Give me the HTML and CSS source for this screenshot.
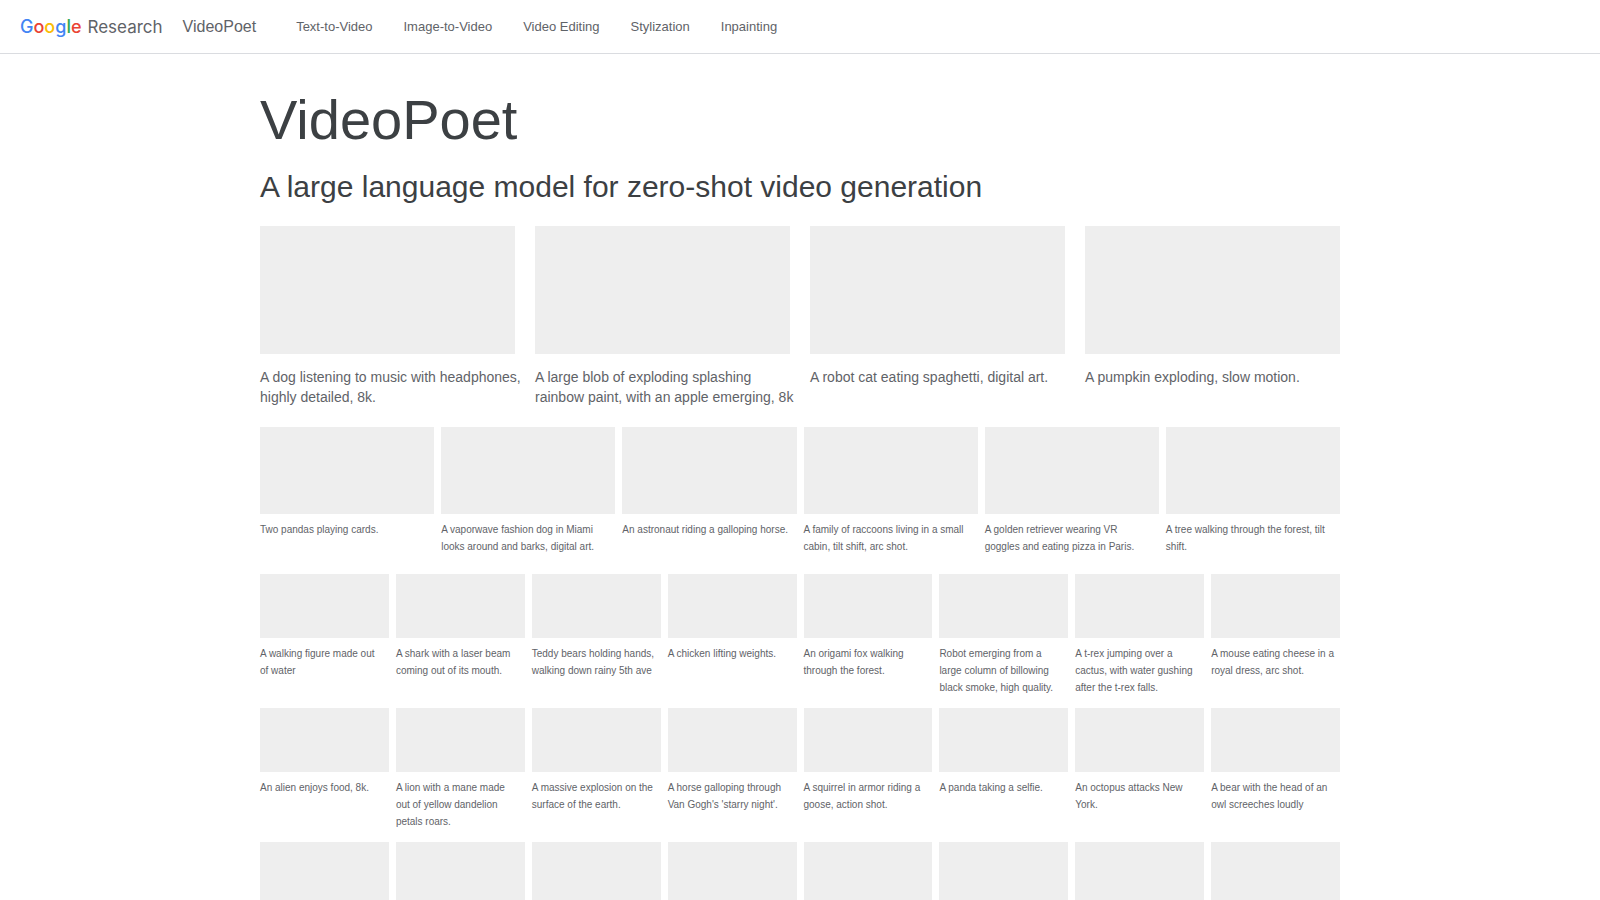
FILE: index.html
```html
<!DOCTYPE html>
<html lang="en">
<head>
  <meta charset="UTF-8">
  <meta name="viewport" content="width=device-width, initial-scale=1.0">
  <title>VideoPoet</title>
  <link rel="stylesheet" href="styles.css">
</head>
<body>
  <header class="header">
    <a class="logo" href="#"><span class="google"><span class="blue">G</span><span class="red">o</span><span class="yellow">o</span><span class="blue">g</span><span class="green">l</span><span class="red">e</span></span><span>Research</span></a>
    <a class="product" href="#">VideoPoet</a>
    <nav class="nav">
      <a href="#">Text-to-Video</a>
      <a href="#">Image-to-Video</a>
      <a href="#">Video Editing</a>
      <a href="#">Stylization</a>
      <a href="#">Inpainting</a>
    </nav>
  </header>

  <main class="container">
    <h1>VideoPoet</h1>
    <h2>A large language model for zero-shot video generation</h2>

    <section class="row large">
      <figure><div class="video"></div><figcaption>A dog listening to music with headphones, highly detailed, 8k.</figcaption></figure>
      <figure><div class="video"></div><figcaption>A large blob of exploding splashing<br>rainbow paint, with an apple emerging, 8k</figcaption></figure>
      <figure><div class="video"></div><figcaption>A robot cat eating spaghetti, digital art.</figcaption></figure>
      <figure><div class="video"></div><figcaption>A pumpkin exploding, slow motion.</figcaption></figure>
    </section>

    <section class="row medium">
      <figure><div class="video"></div><figcaption>Two pandas playing cards.</figcaption></figure>
      <figure><div class="video"></div><figcaption>A vaporwave fashion dog in Miami<br>looks around and barks, digital art.</figcaption></figure>
      <figure><div class="video"></div><figcaption>An astronaut riding a galloping horse.</figcaption></figure>
      <figure><div class="video"></div><figcaption>A family of raccoons living in a small<br>cabin, tilt shift, arc shot.</figcaption></figure>
      <figure><div class="video"></div><figcaption>A golden retriever wearing VR<br>goggles and eating pizza in Paris.</figcaption></figure>
      <figure><div class="video"></div><figcaption>A tree walking through the forest, tilt<br>shift.</figcaption></figure>
    </section>

    <section class="row small">
      <figure><div class="video"></div><figcaption>A walking figure made out<br>of water</figcaption></figure>
      <figure><div class="video"></div><figcaption>A shark with a laser beam<br>coming out of its mouth.</figcaption></figure>
      <figure><div class="video"></div><figcaption>Teddy bears holding hands,<br>walking down rainy 5th ave</figcaption></figure>
      <figure><div class="video"></div><figcaption>A chicken lifting weights.</figcaption></figure>
      <figure><div class="video"></div><figcaption>An origami fox walking<br>through the forest.</figcaption></figure>
      <figure><div class="video"></div><figcaption>Robot emerging from a<br>large column of billowing<br>black smoke, high quality.</figcaption></figure>
      <figure><div class="video"></div><figcaption>A t-rex jumping over a<br>cactus, with water gushing<br>after the t-rex falls.</figcaption></figure>
      <figure><div class="video"></div><figcaption>A mouse eating cheese in a<br>royal dress, arc shot.</figcaption></figure>
    </section>

    <section class="row small">
      <figure><div class="video"></div><figcaption>An alien enjoys food, 8k.</figcaption></figure>
      <figure><div class="video"></div><figcaption>A lion with a mane made<br>out of yellow dandelion<br>petals roars.</figcaption></figure>
      <figure><div class="video"></div><figcaption>A massive explosion on the<br>surface of the earth.</figcaption></figure>
      <figure><div class="video"></div><figcaption>A horse galloping through<br>Van Gogh's 'starry night'.</figcaption></figure>
      <figure><div class="video"></div><figcaption>A squirrel in armor riding a<br>goose, action shot.</figcaption></figure>
      <figure><div class="video"></div><figcaption>A panda taking a selfie.</figcaption></figure>
      <figure><div class="video"></div><figcaption>An octopus attacks New<br>York.</figcaption></figure>
      <figure><div class="video"></div><figcaption>A bear with the head of an<br>owl screeches loudly</figcaption></figure>
    </section>

    <section class="row small">
      <figure><div class="video"></div></figure>
      <figure><div class="video"></div></figure>
      <figure><div class="video"></div></figure>
      <figure><div class="video"></div></figure>
      <figure><div class="video"></div></figure>
      <figure><div class="video"></div></figure>
      <figure><div class="video"></div></figure>
      <figure><div class="video"></div></figure>
    </section>
  </main>
</body>
</html>
```
FILE: styles.css
```css
* {
  box-sizing: border-box;
}
html {
  scrollbar-width: none;
}
body {
  margin: 0;
  font-family: "Liberation Sans", Arial, sans-serif;
  color: #5f6368;
  background-color: #fff;
}
a {
  color: inherit;
  text-decoration: none;
}
.header {
  display: flex;
  align-items: center;
  height: 54px;
  padding: 0 20px;
  border-bottom: 1px solid #dadce0;
}
.logo {
  display: flex;
  align-items: baseline;
  gap: 6px;
  font-family: Inter, sans-serif;
  font-size: 17px;
}
.google {
  font-size: 18px;
  font-weight: 500;
}
.blue {
  color: #4285f4;
}
.red {
  color: #ea4335;
}
.yellow {
  color: #fbbc04;
}
.green {
  color: #34a853;
}
.product {
  margin-left: 20px;
  font-size: 16px;
}
.nav {
  display: flex;
  gap: 31px;
  margin-left: 40px;
  font-size: 13px;
}
.container {
  max-width: 1120px;
  margin: 0 auto;
  padding: 32px 20px 0;
}
h1,
h2 {
  margin: 0;
  font-weight: 400;
  color: #3c4043;
}
h1 {
  font-size: 56px;
  line-height: 68px;
}
h2 {
  margin: 14px 0 20px;
  font-size: 30px;
  line-height: 38px;
}
.row {
  display: grid;
  gap: 7px;
}
figure {
  margin: 0;
}
.video {
  aspect-ratio: 2 / 1;
  background-color: #eee;
}
figcaption {
  margin-top: 7px;
  font-size: 10px;
  line-height: 17px;
}
.large {
  grid-template-columns: repeat(4, 1fr);
  gap: 20px;
  margin-bottom: 20px;
}
.large figcaption {
  margin: 13px -10px 0 0;
  font-size: 14px;
  line-height: 20px;
}
.medium {
  grid-template-columns: repeat(6, 1fr);
  margin-bottom: 19px;
}
.small {
  grid-template-columns: repeat(8, 1fr);
  margin-bottom: 12px;
}
```
